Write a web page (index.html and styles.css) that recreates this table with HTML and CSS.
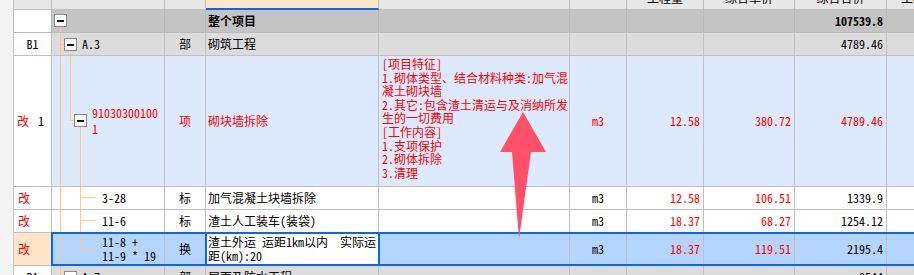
FILE: index.html
```html
<!DOCTYPE html>
<html lang="zh-CN">
<head>
<meta charset="utf-8">
<title>分部分项</title>
<link rel="stylesheet" href="styles.css">
</head>
<body>
<div class="sheet">
  <div class="row hdr">
    <div class="c strip"></div>
    <div class="c a"></div>
    <div class="c b"></div>
    <div class="c cc"></div>
    <div class="c d"></div>
    <div class="c e"></div>
    <div class="c f"></div>
    <div class="c g"><span class="ht">工程量</span></div>
    <div class="c h"><span class="ht">综合单价</span></div>
    <div class="c i"><span class="ht">综合合价</span></div>
    <div class="c j"><span class="ht left">工程</span></div>
  </div>

  <div class="row root">
    <div class="c strip"></div>
    <div class="c a"></div>
    <div class="c b t-root"><span class="box"></span></div>
    <div class="c cc"></div>
    <div class="c d"><b>整个项目</b></div>
    <div class="c e"></div>
    <div class="c f"></div>
    <div class="c g"></div>
    <div class="c h"></div>
    <div class="c i num"><b>107539.8</b></div>
    <div class="c j"></div>
  </div>

  <div class="row grp">
    <div class="c strip"></div>
    <div class="c a ctr">B1</div>
    <div class="c b t-grp"><span class="box"></span><span class="code">A.3</span></div>
    <div class="c cc ctr">部</div>
    <div class="c d">砌筑工程</div>
    <div class="c e"></div>
    <div class="c f"></div>
    <div class="c g"></div>
    <div class="c h"></div>
    <div class="c i num">4789.46</div>
    <div class="c j"></div>
  </div>

  <div class="row item red">
    <div class="c strip"></div>
    <div class="c a"><span class="gai">改</span><span class="no">1</span></div>
    <div class="c b t-item"><span class="box"></span><span class="code two">91030300100<br>1</span></div>
    <div class="c cc ctr">项</div>
    <div class="c d">砌块墙拆除</div>
    <div class="c e desc">[项目特征]<br>1.砌体类型、结合材料种类:加气混<br>凝土砌块墙<br>2.其它:包含渣土清运与及消纳所发<br>生的一切费用<br>[工作内容]<br>1.支项保护<br>2.砌体拆除<br>3.清理</div>
    <div class="c f ctr">m3</div>
    <div class="c g num">12.58</div>
    <div class="c h num">380.72</div>
    <div class="c i num">4789.46</div>
    <div class="c j"></div>
  </div>

  <div class="row sub">
    <div class="c strip"></div>
    <div class="c a"><span class="gai">改</span></div>
    <div class="c b t-sub"><span class="code sc">3-28</span></div>
    <div class="c cc ctr">标</div>
    <div class="c d">加气混凝土块墙拆除</div>
    <div class="c e"></div>
    <div class="c f ctr">m3</div>
    <div class="c g num red">12.58</div>
    <div class="c h num red">106.51</div>
    <div class="c i num">1339.9</div>
    <div class="c j"></div>
  </div>

  <div class="row sub">
    <div class="c strip"></div>
    <div class="c a"><span class="gai">改</span></div>
    <div class="c b t-sub"><span class="code sc">11-6</span></div>
    <div class="c cc ctr">标</div>
    <div class="c d">渣土人工装车(装袋)</div>
    <div class="c e"></div>
    <div class="c f ctr">m3</div>
    <div class="c g num red">18.37</div>
    <div class="c h num red">68.27</div>
    <div class="c i num">1254.12</div>
    <div class="c j"></div>
  </div>

  <div class="row sel">
    <div class="c strip"></div>
    <div class="c a"><span class="gai">改</span></div>
    <div class="c b t-sel"><span class="code sc">11-8 +<br>11-9 * 19</span></div>
    <div class="c cc ctr">换</div>
    <div class="c d edit">渣土外运 运距1km以内&nbsp;&nbsp;实际运<br>距(km):20</div>
    <div class="c e"></div>
    <div class="c f ctr">m3</div>
    <div class="c g num red">18.37</div>
    <div class="c h num red">119.51</div>
    <div class="c i num">2195.4</div>
    <div class="c j"></div>
  </div>

  <div class="row grp">
    <div class="c strip"></div>
    <div class="c a ctr">B1</div>
    <div class="c b t-last"><span class="box"></span><span class="code">A.7</span></div>
    <div class="c cc ctr">部</div>
    <div class="c d">屋面及防水工程</div>
    <div class="c e"></div>
    <div class="c f"></div>
    <div class="c g"></div>
    <div class="c h"></div>
    <div class="c i num">8544</div>
    <div class="c j"></div>
  </div>
</div>

<svg class="arrow" width="914" height="275" viewBox="0 0 914 275" aria-hidden="true">
  <polygon points="523,112 546,152 531,152 519,239 512,152 500,152" fill="#fe5068"/>
</svg>
</body>
</html>
```

FILE: styles.css
```css
:root {
  --grid: #c0c0c0;
  --tree: #ffc87c;
  --blue: #0a66f2;
  --red: #ff0000;
}

html, body {
  margin: 0;
  padding: 0;
}

body {
  width: 914px;
  height: 275px;
  overflow: hidden;
  position: relative;
  background: #ffffff;
  color: #000000;
  font-family: "Noto Sans Mono CJK SC", "Noto Sans CJK SC", monospace;
  font-size: 12px;
  line-height: 14px;
}

.sheet {
  width: 947px;
}

.row {
  display: grid;
  grid-template-columns: 14px 38px 113px 41px 173px 191px 57px 77px 91px 92px 60px;
}

.c {
  box-sizing: border-box;
  border-right: 1px solid var(--grid);
  border-bottom: 1px solid var(--grid);
  display: flex;
  align-items: center;
  overflow: hidden;
  white-space: nowrap;
  min-width: 0;
}

.strip {
  background: #f3f3f3 !important;
  border-bottom: none;
  border-right-color: #c6c6c6;
}

.ctr { justify-content: center; }
.num { justify-content: flex-end; padding-right: 3px; }
.d { padding-left: 2px; }
.e { padding-left: 3px; }
.red { color: var(--red); }

/* header */
.hdr { height: 10px; }
.hdr .c {
  background: #e7e7e7;
  align-items: flex-start;
}
.hdr .d {
  background: #fee6c9;
  border-bottom: 2px solid var(--blue);
}
.ht {
  display: block;
  width: 100%;
  margin-top: -8px;
  line-height: 12px;
  text-align: center;
}
.ht.left {
  text-align: left;
  padding-left: 14px;
}

/* row kinds */
.root { height: 23px; }
.root .c { background-color: #c4c4c4; border-color: #bababa; }
.root .a { background-color: #ffffff; }

.grp { height: 23px; }
.grp .c { background-color: #dcdcdc; }
.grp .a { background-color: #ffffff; }

.item { height: 131px; }
.item .c { background-color: #dde9fc; }
.item .a { background-color: #ffffff; }

.sub { height: 23px; }
.sub .c { background-color: #ffffff; }

.sel { height: 33px; position: relative; }
.sel .c { background-color: #b4d5fd; }
.sel .a { background-color: #fde6c8; }
.sel .d { background-color: #ffffff; overflow: visible; position: relative; line-height: 14px; }
.sel::after {
  content: "";
  position: absolute;
  left: 51px;
  right: 0;
  top: -1px;
  bottom: 0;
  border: 2px solid var(--blue);
  pointer-events: none;
}
.sel .edit::before {
  content: "";
  position: absolute;
  left: -1px;
  right: -2px;
  top: -1px;
  bottom: -1px;
  border: 2px solid var(--blue);
  pointer-events: none;
}

/* row number column */
.a { padding-left: 0; }
.gai {
  color: var(--red);
  margin-left: 3px;
}
.sub .gai, .sel .gai { margin-left: 4px; }
.no {
  color: #000000;
  margin-left: 9px;
}

/* tree column */
.b { align-items: flex-start; }
.box {
  flex: none;
  box-sizing: border-box;
  width: 13px;
  height: 13px;
  border: 1px solid #8a8a8a;
  background: linear-gradient(#111111, #111111) 2px 5px / 7px 2px no-repeat, #ffffff;
}
.code { align-self: center; }
.code.two { line-height: 16px; }
.code.sc { margin-left: 50px; }

.t-root .box { margin: 4px 0 0 2px; }
.t-root {
  background-image: linear-gradient(var(--tree), var(--tree));
  background-position: 8px 17px;
  background-size: 1px 100%;
  background-repeat: no-repeat;
}

.t-grp .box, .t-last .box { margin: 5px 5px 0 12px; }
.t-grp {
  background-image:
    linear-gradient(var(--tree), var(--tree)),
    linear-gradient(var(--tree), var(--tree)),
    linear-gradient(var(--tree), var(--tree));
  background-position: 8px 0, 8px 11px, 18px 18px;
  background-size: 1px 100%, 4px 1px, 1px 100%;
  background-repeat: no-repeat;
}
.t-last {
  background-image:
    linear-gradient(var(--tree), var(--tree)),
    linear-gradient(var(--tree), var(--tree));
  background-position: 8px 0, 8px 11px;
  background-size: 1px 100%, 4px 1px;
  background-repeat: no-repeat;
}

.t-item .box { margin: 58px 5px 0 22px; }
.t-item {
  background-image:
    linear-gradient(var(--tree), var(--tree)),
    linear-gradient(var(--tree), var(--tree)),
    linear-gradient(var(--tree), var(--tree)),
    linear-gradient(var(--tree), var(--tree));
  background-position: 8px 0, 18px 0, 18px 64px, 28px 71px;
  background-size: 1px 100%, 1px 65px, 4px 1px, 1px 100%;
  background-repeat: no-repeat;
}

.t-sub {
  background-image:
    linear-gradient(var(--tree), var(--tree)),
    linear-gradient(var(--tree), var(--tree)),
    linear-gradient(var(--tree), var(--tree));
  background-position: 8px 0, 28px 0, 28px 10px;
  background-size: 1px 100%, 1px 100%, 15px 1px;
  background-repeat: no-repeat;
}

.t-sel {
  background-image:
    linear-gradient(var(--tree), var(--tree)),
    linear-gradient(var(--tree), var(--tree)),
    linear-gradient(var(--tree), var(--tree));
  background-position: 8px 0, 28px 0, 28px 15px;
  background-size: 1px 100%, 1px 16px, 15px 1px;
  background-repeat: no-repeat;
}

/* description */
.desc {
  display: block;
  padding-top: 1px;
  line-height: 13.6px;
}

.arrow {
  position: absolute;
  left: 0;
  top: 0;
  pointer-events: none;
}
```
